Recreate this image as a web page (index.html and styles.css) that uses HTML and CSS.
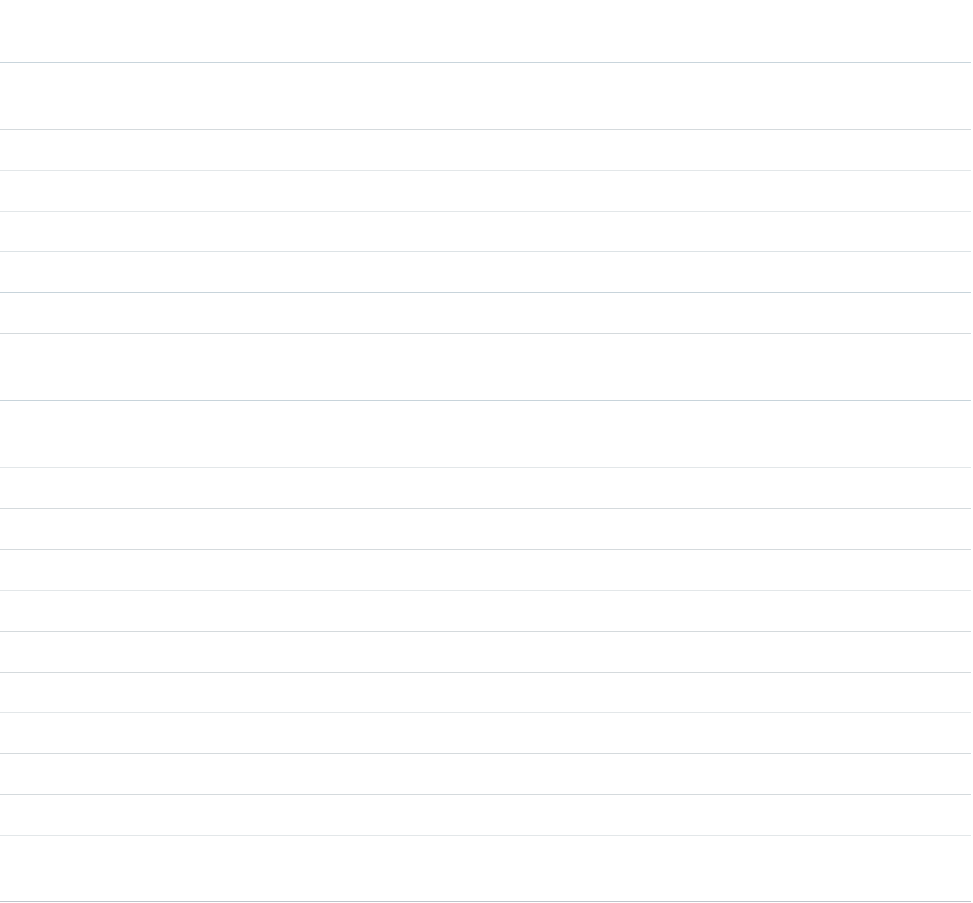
FILE: index.html
```html
<!DOCTYPE html>
<html lang="en">

<head>
    <meta charset="UTF-8">
    <meta name="viewport" content="width=device-width, initial-scale=1.0">
    <title>List</title>
    <link rel="stylesheet" href="styles.css">
</head>

<body>

    <div class="sheet">
        <div class="head"></div>
        <div class="row tall"></div>
        <div class="row light"></div>
        <div class="row light"></div>
        <div class="row short mid"></div>
        <div class="row blue"></div>
        <div class="row"></div>
        <div class="row tall blue"></div>
        <div class="row tall light"></div>
        <div class="row"></div>
        <div class="row"></div>
        <div class="row light"></div>
        <div class="row"></div>
        <div class="row"></div>
        <div class="row short light"></div>
        <div class="row"></div>
        <div class="row"></div>
        <div class="row light"></div>
        <div class="foot"></div>
    </div>

</body>

</html>
```

FILE: styles.css
```css
body {
    font-family: "Liberation Sans", Arial, sans-serif;
    margin: 0;
    padding: 0;
    background-color: #fff;
}

.sheet {
    margin-right: 2px;
}

.head,
.row,
.foot {
    box-sizing: border-box;
    border-bottom: 1px solid #d5dadd;
}

.head {
    height: 63px;
    border-bottom-color: #c9d5dc;
}

.row {
    height: 41px;
}

.row.short {
    height: 40px;
}

.row.tall {
    height: 67px;
}

.row.light {
    border-bottom-color: #e3e7e9;
}

.row.mid {
    border-bottom-color: #dde3e6;
}

.row.blue {
    border-bottom-color: #c8d4db;
}

.foot {
    height: 66px;
    border-bottom-color: #bfc5cb;
}
```
